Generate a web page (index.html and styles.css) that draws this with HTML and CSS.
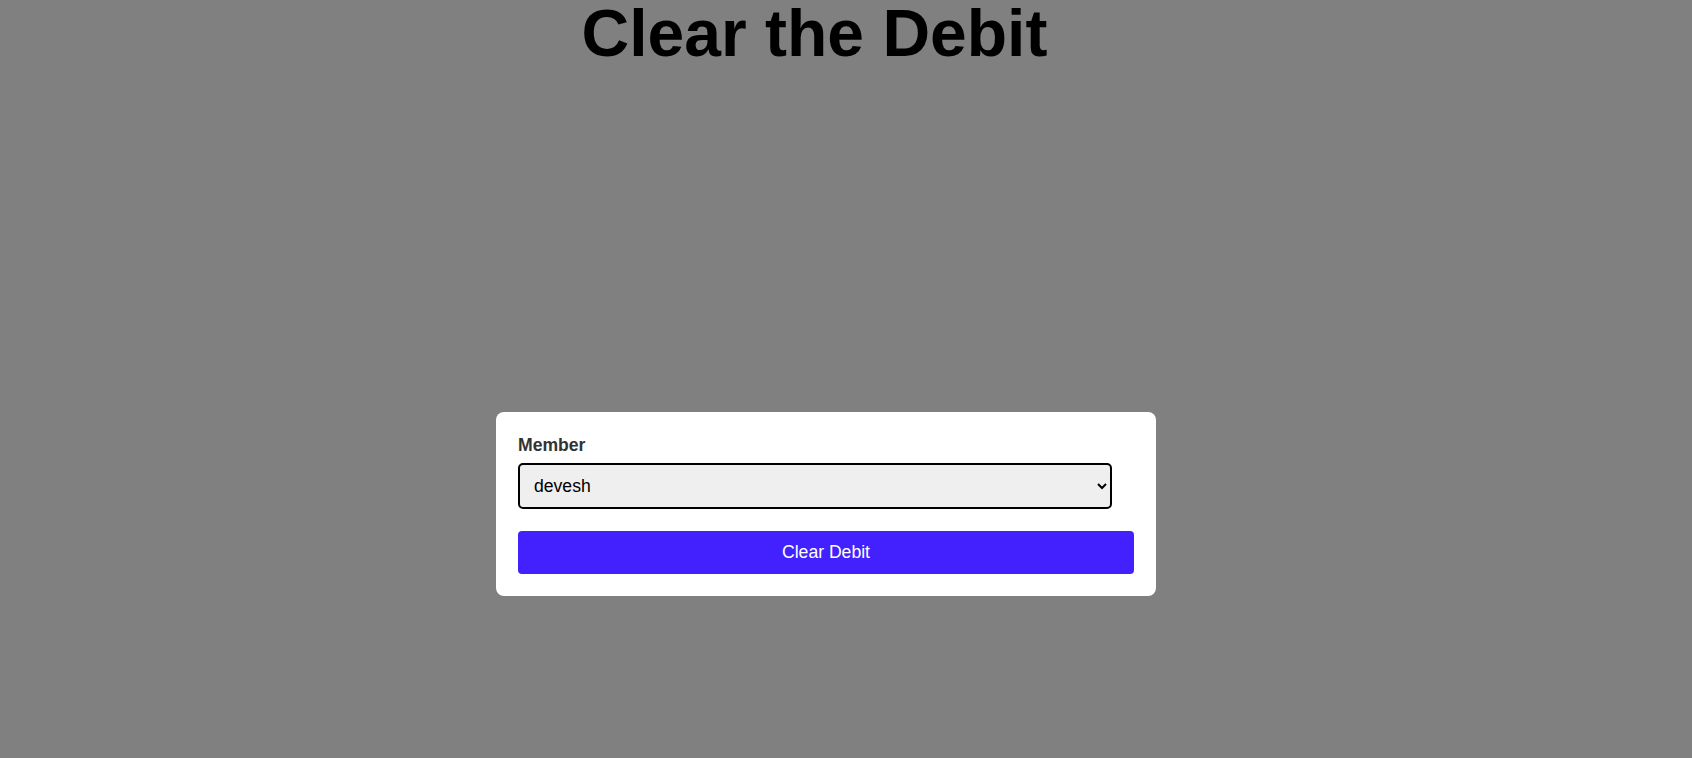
FILE: index.html
```html
<!DOCTYPE html>
<html lang="en">
<head>
<meta charset="utf-8">
<title>Clear the Debit</title>
<link rel="stylesheet" href="styles.css">
</head>
<body>
<h1 class="title">Clear the Debit</h1>
<main class="stage">
  <form class="card">
    <label class="field-label" for="member">Member</label>
    <select class="member-select" id="member" name="member">
      <option>devesh</option>
    </select>
    <button class="submit" type="button">Clear Debit</button>
  </form>
</main>
</body>
</html>
```

FILE: styles.css
```css
html, body {
  margin: 0;
  padding: 0;
}

body {
  background: #808080;
  font-family: "Liberation Sans", Arial, sans-serif;
  height: 758px;
  overflow: hidden;
}

.title {
  margin: 0;
  padding-right: 63px;
  text-align: center;
  font-size: 66px;
  line-height: 66px;
  font-weight: bold;
  color: #000;
}

.stage {
  display: flex;
  justify-content: center;
  padding-right: 40px;
  padding-top: 346px;
}

.card {
  box-sizing: border-box;
  width: 660px;
  background: #fff;
  border-radius: 8px;
  padding: 23px 22px 22px;
  display: flex;
  flex-direction: column;
  align-items: flex-start;
}

.field-label {
  display: block;
  font-size: 17.6px;
  font-weight: bold;
  color: #333;
  margin-bottom: 7px;
}

.member-select {
  box-sizing: border-box;
  width: 594px;
  height: 46px;
  border: 2px solid #000;
  border-radius: 5px;
  background-color: #efefef;
  color: #000;
  font-family: "Liberation Sans", Arial, sans-serif;
  font-size: 17.6px;
  padding: 0 10px;
  margin: 0 0 22px 0;
}

.submit {
  box-sizing: border-box;
  width: 100%;
  height: 43px;
  border: none;
  border-radius: 4px;
  background: #4321ff;
  color: #fff;
  font-family: "Liberation Sans", Arial, sans-serif;
  font-size: 17.6px;
  margin: 0;
  padding: 0;
}
```
